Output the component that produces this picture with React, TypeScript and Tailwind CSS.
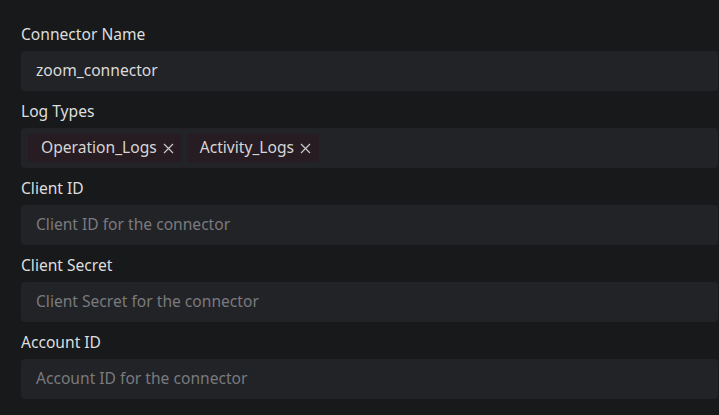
export default function App() {
  const fields = [
    { label: "Client ID", placeholder: "Client ID for the connector" },
    { label: "Client Secret", placeholder: "Client Secret for the connector" },
    { label: "Account ID", placeholder: "Account ID for the connector" },
  ];
  const tags = ["Operation_Logs", "Activity_Logs"];

  return (
    <main
      className="min-h-[415px] w-full bg-[#18191b] pl-[21px] pr-px pt-[23px] text-[15.6px] text-[#dedede]"
      style={{ fontFamily: '"Noto Sans", "Open Sans", sans-serif' }}
    >
      <div className="flex flex-col gap-[9px]">
        {/* Connector name */}
        <div className="flex flex-col">
          <label className="mb-[6px] leading-[22px]">Connector Name</label>
          <div className="flex h-10 items-center rounded-[4px] bg-[#222327] px-[15px] text-[#dadada]">
            zoom_connector
          </div>
        </div>

        {/* Log types */}
        <div className="flex flex-col">
          <label className="mb-[6px] leading-[22px]">Log Types</label>
          <div className="flex h-10 items-center gap-[5px] rounded-[4px] bg-[#222327] px-[7px]">
            {tags.map((t) => (
              <span
                key={t}
                className="flex h-[28px] items-center gap-[6px] rounded-[3px] bg-[#271c21] pl-[13px] pr-[8px] text-[#d6d6d6]"
              >
                {t}
                <svg width="11" height="11" viewBox="0 0 11 11" className="text-[#c8c8c8]">
                  <path d="M1 1 L10 10 M10 1 L1 10" stroke="currentColor" strokeWidth="1.2" fill="none" />
                </svg>
              </span>
            ))}
          </div>
        </div>

        {fields.map((f) => (
          <div key={f.label} className="flex flex-col">
            <label className="mb-[6px] leading-[22px]">{f.label}</label>
            <div className="flex h-10 items-center rounded-[4px] bg-[#222327] px-[15px] text-[#797a7e]">
              {f.placeholder}
            </div>
          </div>
        ))}
      </div>
    </main>
  );
}
